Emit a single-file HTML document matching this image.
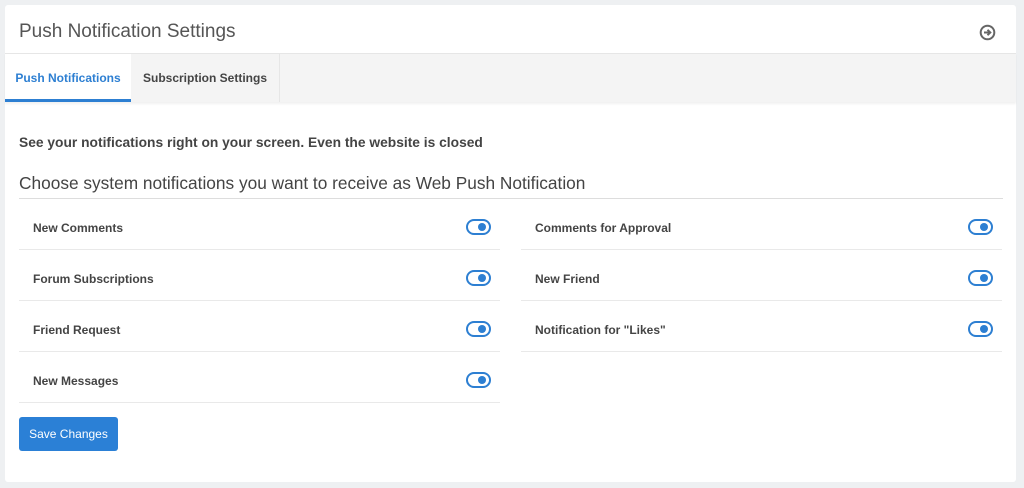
<!DOCTYPE html>
<html><head><style>
body{margin:0;background:#eef0f2;font-family:"Liberation Sans",sans-serif;width:1024px;height:488px;overflow:hidden;position:relative}
.card{position:absolute;left:5px;top:5px;width:1011px;height:477px;background:#fff;border-radius:3px}
.hdr{position:absolute;left:14px;top:16px;font-size:19px;color:#555}
.tabs{position:absolute;left:0;top:48px;width:1011px;height:48px;background:#f4f4f4;border-top:1px solid #e6e6e6;box-shadow:0 2px 2px rgba(0,0,0,.06)}
.tab{position:absolute;top:0;height:48px;line-height:48px;font-size:12px;font-weight:bold;color:#444;text-align:center}
.t1{left:0;width:126px;background:#fff;color:#2d7fd2;border-bottom:3px solid #2d7fd2;box-sizing:border-box}
.t2{left:126px;width:148px;border-right:1px solid #e6e6e6}
.p{position:absolute;left:14px;top:130px;font-size:13.8px;font-weight:bold;color:#444}
.h2{position:absolute;left:14px;top:168px;width:984px;font-size:17.3px;color:#444;border-bottom:1px solid #ddd;padding-bottom:4px}
.row{position:absolute;width:481px;height:50px;border-bottom:1px solid #e9e9e9;font-size:12px;font-weight:bold;color:#444}
.row span{position:absolute;left:14px;top:22px}
.tg{position:absolute;left:447px;top:20px;width:21px;height:12px;border:2px solid #2d7fd2;border-radius:8px}
.tg:after{content:"";position:absolute;right:3px;top:2px;width:8px;height:8px;border-radius:50%;background:#2d7fd2}
.btn{position:absolute;left:14px;top:412px;width:99px;height:34px;background:#2b80d6;border-radius:3px;color:#fff;font-size:12px;line-height:34px;text-align:center}
</style></head><body>
<div class="card">
<div class="hdr">Push Notification Settings</div>
<svg style="position:absolute;left:974px;top:19px" width="17" height="17" viewBox="0 0 17 17"><circle cx="8.5" cy="8.5" r="6.8" fill="none" stroke="#666" stroke-width="2"/><path d="M5 8.5h6M8.5 5.8l2.8 2.7-2.8 2.7" fill="none" stroke="#666" stroke-width="2"/></svg>
<div class="tabs"><div class="tab t1">Push Notifications</div><div class="tab t2">Subscription Settings</div></div>
<div class="p">See your notifications right on your screen. Even the website is closed</div>
<div class="h2">Choose system notifications you want to receive as Web Push Notification</div>
<div class="row" style="left:14px;top:194px"><span>New Comments</span><div class="tg"></div></div>
<div class="row" style="left:14px;top:245px"><span>Forum Subscriptions</span><div class="tg"></div></div>
<div class="row" style="left:14px;top:296px"><span>Friend Request</span><div class="tg"></div></div>
<div class="row" style="left:14px;top:347px"><span>New Messages</span><div class="tg"></div></div>
<div class="row" style="left:516px;top:194px"><span>Comments for Approval</span><div class="tg"></div></div>
<div class="row" style="left:516px;top:245px"><span>New Friend</span><div class="tg"></div></div>
<div class="row" style="left:516px;top:296px"><span>Notification for "Likes"</span><div class="tg"></div></div>
<div class="btn">Save Changes</div>
</div>
</body></html>
